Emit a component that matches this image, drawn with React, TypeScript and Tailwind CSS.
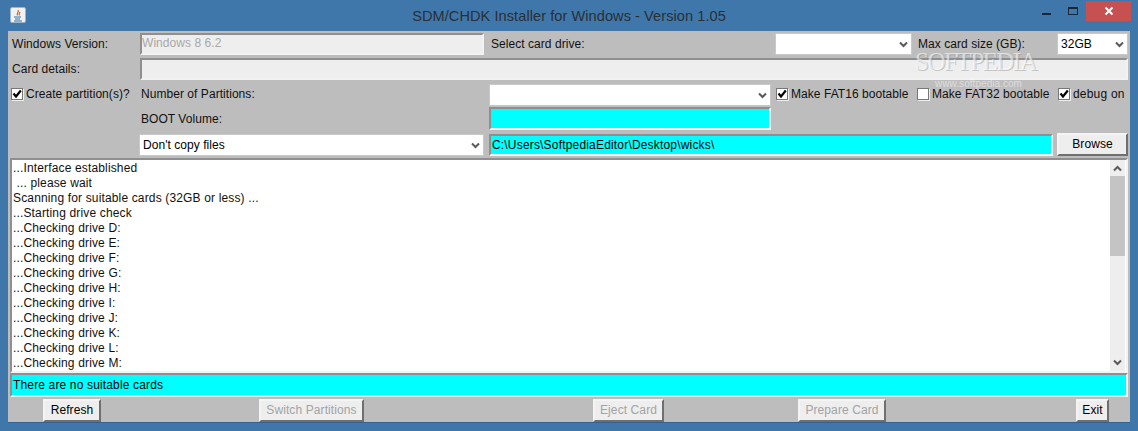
import React from "react";

const logLines = [
  "...Interface established",
  " ... please wait",
  "Scanning for suitable cards (32GB or less) ...",
  "...Starting drive check",
  "...Checking drive D:",
  "...Checking drive E:",
  "...Checking drive F:",
  "...Checking drive G:",
  "...Checking drive H:",
  "...Checking drive I:",
  "...Checking drive J:",
  "...Checking drive K:",
  "...Checking drive L:",
  "...Checking drive M:",
];

const sunken = "border-2 border-t-[#8f8f8f] border-l-[#8f8f8f] border-r-[#f2f2f2] border-b-[#f2f2f2]";

function Chevron({ className = "" }: { className?: string }) {
  return (
    <svg width="9" height="7" viewBox="0 0 9 7" className={className}>
      <path d="M1 1.5 L4.5 5 L8 1.5" fill="none" stroke="#5a5a5a" strokeWidth="2" />
    </svg>
  );
}

function Combo({ value, className }: { value?: string; className: string }) {
  return (
    <div className={`flex h-[22px] items-center justify-between border border-[#c8c8c8] bg-white pl-[3px] pr-[3px] text-black ${className}`}>
      <span>{value}</span>
      <Chevron />
    </div>
  );
}

function Check({ label, checked, className = "" }: { label: string; checked?: boolean; className?: string }) {
  return (
    <div className={`flex items-center gap-[3px] pb-[2px] ${className}`}>
      <span className="flex h-[12px] w-[12px] items-center justify-center border border-[#777] bg-white shadow-[1px_1px_0_#eee]">
        {checked && (
          <svg width="10" height="10" viewBox="0 0 10 10">
            <path d="M1.5 4.5 L4 7.5 L8.8 1.5" fill="none" stroke="#000" strokeWidth="2.2" />
          </svg>
        )}
      </span>
      <span className="whitespace-nowrap">{label}</span>
    </div>
  );
}

function Btn({ label, disabled, className }: { label: string; disabled?: boolean; className: string }) {
  return (
    <button
      className={`flex h-[23px] items-center justify-center border-2 border-t-[#f4f4f4] border-l-[#f4f4f4] border-r-[#6f6f6f] border-b-[#6f6f6f] bg-[#eeeeee] tracking-[0.1px] ${disabled ? "text-[#a3a3a3]" : "text-black"} ${className}`}
    >
      {label}
    </button>
  );
}

export default function App() {
  return (
    <div className="relative flex h-[431px] w-[1138px] flex-col overflow-hidden bg-[#3f77aa] px-2 pb-2 font-['Liberation_Sans',Arial,sans-serif] text-[12px] leading-[15px] tracking-[0.05px] text-[#111]">
      {/* title bar */}
      <div className="relative flex h-[31px] shrink-0 items-start">
        <div className="ml-[2px] mt-[7px] flex h-[16px] w-[16px] items-center justify-center rounded-[2px] border border-[#9fb4c8] bg-[#f1f1f1]">
          <svg width="12" height="13" viewBox="0 0 12 13">
            <path d="M6 1 C7.5 3 4 4 5.5 6.5 M8 3 C7 4.5 6.5 5 7.5 6.5" fill="none" stroke="#d9601a" strokeWidth="1.2" />
            <path d="M2 8 H9 M3 10 H8 M2 12 H10" fill="none" stroke="#2f6ea5" strokeWidth="1" />
          </svg>
        </div>
        <div className="absolute left-0 right-0 top-[7px] text-center text-[14.6px] leading-[18px] text-[#2a2f36]">
          SDM/CHDK Installer for Windows - Version 1.05
        </div>
        <div className="ml-auto flex items-start">
          <svg width="11" height="4" viewBox="0 0 11 4" className="mt-[12px]">
            <rect width="9" height="2" y="1" fill="#1d2733" />
          </svg>
          <svg width="12" height="10" viewBox="0 0 12 10" className="ml-[15px] mt-[7px]">
            <rect x="0.5" y="0.5" width="9" height="7" fill="none" stroke="#1d2733" />
            <rect x="0" y="0" width="10" height="2" fill="#1d2733" />
          </svg>
          <div className="ml-[6px] mr-[-1px] mt-[1px] flex h-[20px] w-[45px] items-center justify-center bg-[#c75050]">
            <svg width="10" height="10" viewBox="0 0 10 10">
              <path d="M1.5 1.5 L8.5 8.5 M8.5 1.5 L1.5 8.5" stroke="#fff" strokeWidth="2" />
            </svg>
          </div>
        </div>
      </div>

      {/* client area */}
      <div className="flex min-h-0 flex-1 flex-col border-b border-[#34638f] bg-[#bdbdbd] px-[2px] pt-[2px]">
        <div className="flex h-[22px] items-center">
          <span className="w-[130px] pl-[2px]">Windows Version:</span>
          <div className={`flex h-[22px] w-[344px] items-center bg-[#eeeeee] pb-[2px] text-[#a8a8a8] ${sunken}`}>Windows 8 6.2</div>
          <span className="ml-[7px] w-[284px]">Select card drive:</span>
          <Combo className="w-[137px]" />
          <span className="ml-[6px] w-[139px]">Max card size (GB):</span>
          <Combo value="32GB" className="w-[71px]" />
        </div>
        <div className="mt-[3px] flex h-[22px] items-center">
          <span className="w-[130px] pl-[2px]">Card details:</span>
          <div className={`h-[22px] flex-1 bg-[#eeeeee] ${sunken}`} />
        </div>
        <div className="mt-[4px] flex h-[22px] items-center">
          <Check label="Create partition(s)?" checked className="w-[129px] pl-[1px]" />
          <span className="ml-[2px] w-[348px] pb-[2px]">Number of Partitions:</span>
          <Combo className="w-[282px]" />
          <Check label="Make FAT16 bootable" checked className="ml-[5px] w-[141px]" />
          <Check label="Make FAT32 bootable" className="w-[141px]" />
          <Check label="debug on" checked className="tracking-[0.2px]" />
        </div>
        <div className="mt-[1px] flex h-[23px] items-center">
          <span className="ml-[131px] w-[348px] pt-[2px]">BOOT Volume:</span>
          <div className={`h-[23px] w-[282px] bg-[#00ffff] ${sunken}`} />
        </div>
        <div className="mt-[4px] flex h-[22px] items-center">
          <Combo value="Don't copy files" className="ml-[129px] w-[345px]" />
          <div className={`ml-[5px] flex h-[22px] w-[564px] items-center bg-[#00ffff] pl-[1px] tracking-[0.18px] text-black ${sunken}`}>
            C:\Users\SoftpediaEditor\Desktop\wicks\
          </div>
          <Btn label="Browse" className="-mt-[2px] ml-[4px] flex-1" />
        </div>

        {/* log */}
        <div className={`mt-[2px] flex h-[215px] bg-white ${sunken}`}>
          <div className="min-w-0 flex-1 overflow-hidden whitespace-pre pl-[1px] pt-[1px] tracking-[0.15px] text-[#111]">
            {logLines.map((line) => (
              <div key={line}>{line}</div>
            ))}
          </div>
          <div className="mr-[1px] flex w-[15px] shrink-0 flex-col items-center bg-[#eeeeee]">
            <div className="flex h-[16px] items-center justify-center">
              <Chevron className="rotate-180" />
            </div>
            <div className="h-[80px] w-full bg-[#c4c4c4]" />
            <div className="flex-1" />
            <div className="flex h-[17px] items-center justify-center">
              <Chevron />
            </div>
          </div>
        </div>

        <div className={`flex h-[24px] items-center bg-[#00ffff] pl-[1px] tracking-[0.15px] text-black ${sunken}`}>
          There are no suitable cards
        </div>

        <div className="mt-[2px] flex items-start">
          <Btn label="Refresh" className="ml-[33px] w-[58px]" />
          <Btn label="Switch Partitions" disabled className="ml-[158px] w-[105px]" />
          <Btn label="Eject Card" disabled className="ml-[229px] w-[71px]" />
          <Btn label="Prepare Card" disabled className="ml-[134px] w-[88px]" />
          <Btn label="Exit" className="ml-[190px] w-[33px]" />
        </div>
      </div>

      {/* watermark */}
      <div className="pointer-events-none absolute left-[915px] top-[52px] whitespace-nowrap font-['Liberation_Serif',serif] text-[25px] leading-[20px] tracking-[-1.5px] text-white/55 [text-shadow:1px_1px_0_rgba(130,130,130,0.4)]">
        SOFTPEDIA
      </div>
      <div className="pointer-events-none absolute left-[935px] top-[79px] text-[10px] leading-[9px] text-white/50">www.softpedia.com</div>
    </div>
  );
}
